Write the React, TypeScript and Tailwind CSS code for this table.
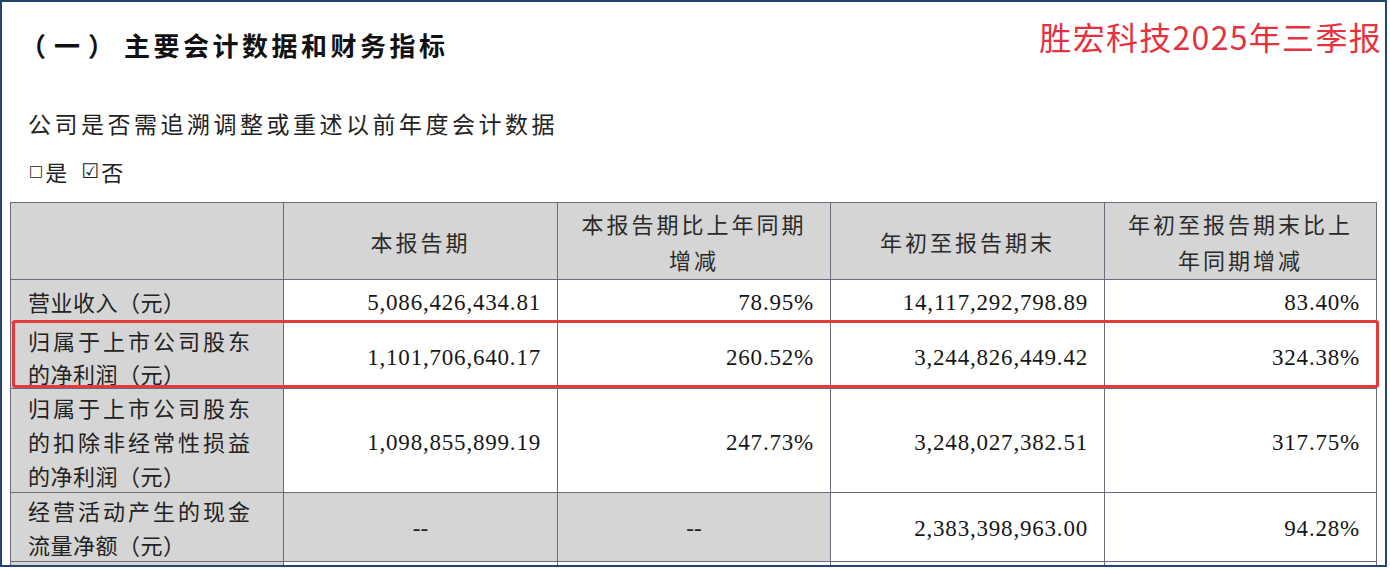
const rows = [
  {
    label: ["营业收入（元）"],
    vals: ["5,086,426,434.81", "78.95%", "14,117,292,798.89", "83.40%"],
    labelCls: "justify-center leading-[35px]",
  },
  {
    label: ["归属于上市公司股东", "的净利润（元）"],
    vals: ["1,101,706,640.17", "260.52%", "3,244,826,449.42", "324.38%"],
    labelCls: "justify-start pt-[1px] leading-[33px]",
  },
  {
    label: ["归属于上市公司股东", "的扣除非经常性损益", "的净利润（元）"],
    vals: ["1,098,855,899.19", "247.73%", "3,248,027,382.51", "317.75%"],
    labelCls: "justify-center leading-[34px]",
  },
  {
    label: ["经营活动产生的现金", "流量净额（元）"],
    vals: ["--", "--", "2,383,398,963.00", "94.28%"],
    labelCls: "justify-center leading-[34px]",
  },
  {
    label: [""],
    vals: ["", "", "", ""],
    labelCls: "justify-center leading-[34px]",
  },
];

function HeadCell({ lines }: { lines: string[] }) {
  return (
    <div className="bg-[#d5d5d5] flex flex-col justify-center items-center leading-[36px] text-[22px] tracking-[3px] text-[#2a2a2a]">
      {lines.map((l, i) => (
        <span key={i}>{l}</span>
      ))}
    </div>
  );
}

export default function App() {
  return (
    <div className="w-[1390px] h-[570px] bg-white font-['Noto_Sans_CJK_SC',sans-serif]">
      <div className="relative w-[1387px] h-[567px] border-2 border-[#27436f] bg-white overflow-hidden">
        <div className="flex justify-between h-[80px]">
          <h1 className="mt-[30px] pl-[18px] flex text-[26px] leading-[26px] font-bold text-[#111]">
            <span className="tracking-[8px]">（一）</span>
            <span className="ml-[2px] tracking-[3.5px]">主要会计数据和财务指标</span>
          </h1>
          <div className="mt-[18px] pr-[3px] text-[32px] leading-[32px] tracking-[1.3px] text-[#e5323e]">
            胜宏科技2025年三季报
          </div>
        </div>

        <p className="mt-[30px] pl-[26px] text-[23px] leading-[23px] tracking-[3.5px] text-[#222]">
          公司是否需追溯调整或重述以前年度会计数据
        </p>

        <p className="mt-[25px] pl-[27px] flex items-center gap-[2px] h-[22px] text-[22px] leading-[22px] text-[#222]">
          <span className="text-[15px] font-['DejaVu_Sans',sans-serif]">□</span>
          <span>是</span>
          <span className="ml-[12px] text-[20px] leading-[22px] font-['DejaVu_Sans',sans-serif]">☑</span>
          <span>否</span>
        </p>

        <div className="mt-[20px] ml-[8px] w-max grid grid-cols-[272px_273px_272px_273px_271px] grid-rows-[76px_42px_65px_103px_68px_60px] gap-px p-px bg-[#6d6b7b]">
          <HeadCell lines={[""]} />
          <HeadCell lines={["本报告期"]} />
          <HeadCell lines={["本报告期比上年同期", "增减"]} />
          <HeadCell lines={["年初至报告期末"]} />
          <HeadCell lines={["年初至报告期末比上", "年同期增减"]} />

          {rows.map((r, ri) => (
            <div key={ri} className="contents">
              <div className={`bg-[#d5d5d5] pl-[17px] flex flex-col overflow-hidden text-[22px] text-[#222] ${r.labelCls}`}>
                {r.label.map((l, i) => (
                  <span key={i} className={l.length === 9 ? "tracking-[3px]" : "tracking-[0.5px]"}>
                    {l}
                  </span>
                ))}
              </div>
              {r.vals.map((v, vi) => (
                <div
                  key={vi}
                  className={
                    v === "--"
                      ? "bg-[#d5d5d5] flex items-center justify-center pt-[3px] font-['Liberation_Serif',serif] text-[23px] leading-none text-[#222]"
                      : "bg-white flex items-center justify-end pr-[16px] pt-[3px] font-['Liberation_Serif',serif] text-[23px] leading-none tracking-[0.8px] text-[#161616]"
                  }
                >
                  {v}
                </div>
              ))}
            </div>
          ))}
        </div>

        <div className="absolute left-[10px] top-[318px] w-[1367px] h-[68px] border-[3px] border-[#e53a3a] rounded-[3px]" />
      </div>
    </div>
  );
}
